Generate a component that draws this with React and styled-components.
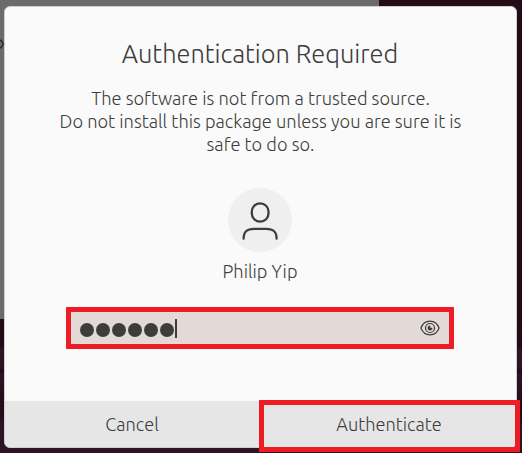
import React from "react";
import styled, { createGlobalStyle } from "styled-components";

const GlobalStyle = createGlobalStyle`
  * { box-sizing: border-box; }
  body { margin: 0; overflow: hidden; }
`;

const Desktop = styled.main`
  position: relative;
  width: 522px;
  height: 453px;
  padding: 6px 5px 5px 4px;
  overflow: hidden;
  background: linear-gradient(#240b18 0, #240b18 300px, #260a19 347px, #2f1424 349px, #2f1424 368px, #250817 371px, #2f1223 374px, #270b1a 411px, #301325 428px, #2e1422 453px);
  color: #3d3d3d;
  font-family: Ubuntu, "Noto Sans", sans-serif;
`;

const BackWindow = styled.div`
  position: absolute;
  left: 0;
  top: 0;
  width: 379px;
  height: 319px;
  background: #6b6b6b;
`;

const Chevron = styled.svg`
  position: absolute;
  left: 0;
  top: 39px;
  width: 4px;
  height: 10px;
`;

const Dialog = styled.section`
  position: relative;
  display: flex;
  flex-direction: column;
  height: 442px;
  border-radius: 6px;
  border: 1px solid #cfcfcf;
  background: #fafafa;
  overflow: hidden;
`;

const Content = styled.div`
  flex: 1;
  display: flex;
  flex-direction: column;
  align-items: center;
  padding-right: 1px;
`;

const Title = styled.h1`
  margin: 30px 0 0;
  height: 34px;
  font-size: 25.4px;
  font-weight: 300;
  line-height: 34px;
  white-space: nowrap;
`;

const Message = styled.div`
  margin-top: 16px;
  padding-left: 1px;
  display: flex;
  flex-direction: column;
  align-items: center;
`;

const Line = styled.span`
  font-size: 18.27px;
  font-weight: 350;
  line-height: 23px;
  white-space: nowrap;
`;

const Avatar = styled.div`
  margin-top: 32px;
  width: 64px;
  height: 64px;
  border-radius: 50%;
  background: #efefef;
`;

const UserName = styled(Line)`
  margin-top: 8px;
`;

const PasswordField = styled.div`
  display: flex;
  align-items: center;
  width: 388px;
  height: 42px;
  margin-top: 24px;
  padding: 0 9px 0 9px;
  border: 5px solid #ee1c25;
  background: #e3dad8;
`;

const Dots = styled.div`
  display: flex;
  gap: 2px;
  padding-top: 4px;
`;

const Dot = styled.i`
  width: 14px;
  height: 14px;
  border-radius: 50%;
  background: #3d3d3d;
`;

const Caret = styled.i`
  width: 2px;
  height: 19px;
  margin-left: 1px;
  margin-top: 1px;
  background: #3d3d3d;
`;

const Eye = styled.svg`
  width: 20px;
  height: 16px;
  margin-left: auto;
`;

const Actions = styled.footer`
  display: grid;
  grid-template-columns: 254px 1fr;
  height: 46px;
  background: #e6e6e6;
`;

const ActionButton = styled.button`
  padding: 0 0 0 ${(p) => p.$inset || 0}px;
  border: 0;
  background: transparent;
  color: inherit;
  font: 350 18.2px/46px Ubuntu, "Noto Sans", sans-serif;
`;

const ActionHighlight = styled.div`
  position: absolute;
  left: 259px;
  top: 400px;
  width: 261px;
  height: 52px;
  border: 5px solid #ee1c25;
  pointer-events: none;
`;

export default function App() {
  return (
    <>
      <GlobalStyle />
      <Desktop>
        <BackWindow />
        <Chevron viewBox="0 0 4 10" fill="none" stroke="#242424" strokeWidth="1.3">
          <path d="M0 1.8L1 1.2L3.4 5L1 8.8L0 8.8" />
        </Chevron>
        <Dialog>
          <Content>
            <Title>Authentication Required</Title>
            <Message>
              <Line>The software is not from a trusted source.</Line>
              <Line>Do not install this package unless you are sure it is</Line>
              <Line>safe to do so.</Line>
            </Message>
            <Avatar>
              <svg width="64" height="64" viewBox="0 0 64 64" fill="none" stroke="#3d3d3d" strokeWidth="2.3" strokeLinecap="round">
                <rect x="23.8" y="15.3" width="16.7" height="18.4" rx="8.3" />
                <path d="M15.6 50.7C15.6 43 19.5 40.8 26 40.8H38.3C45 40.8 48.6 43 48.6 50.7" />
              </svg>
            </Avatar>
            <UserName>Philip Yip</UserName>
            <PasswordField>
              <Dots>
                {Array.from({ length: 6 }, (_, i) => <Dot key={i} />)}
              </Dots>
              <Caret />
              <Eye viewBox="0 0 20 16" fill="none" stroke="#3d3d3d" strokeWidth="1.2">
                <path d="M.9 8C4.5-1.1 15.5-1.1 19.1 8C15.5 17.1 4.5 17.1 .9 8Z" />
                <circle cx="10" cy="8" r="4.5" />
                <path d="M10 5.8A2.2 2.2 0 1 0 12.2 8H10Z" fill="#3d3d3d" strokeWidth=".5" />
              </Eye>
            </PasswordField>
          </Content>
          <Actions>
            <ActionButton>Cancel</ActionButton>
            <ActionButton $inset={3}>Authenticate</ActionButton>
          </Actions>
        </Dialog>
        <ActionHighlight />
      </Desktop>
    </>
  );
}
